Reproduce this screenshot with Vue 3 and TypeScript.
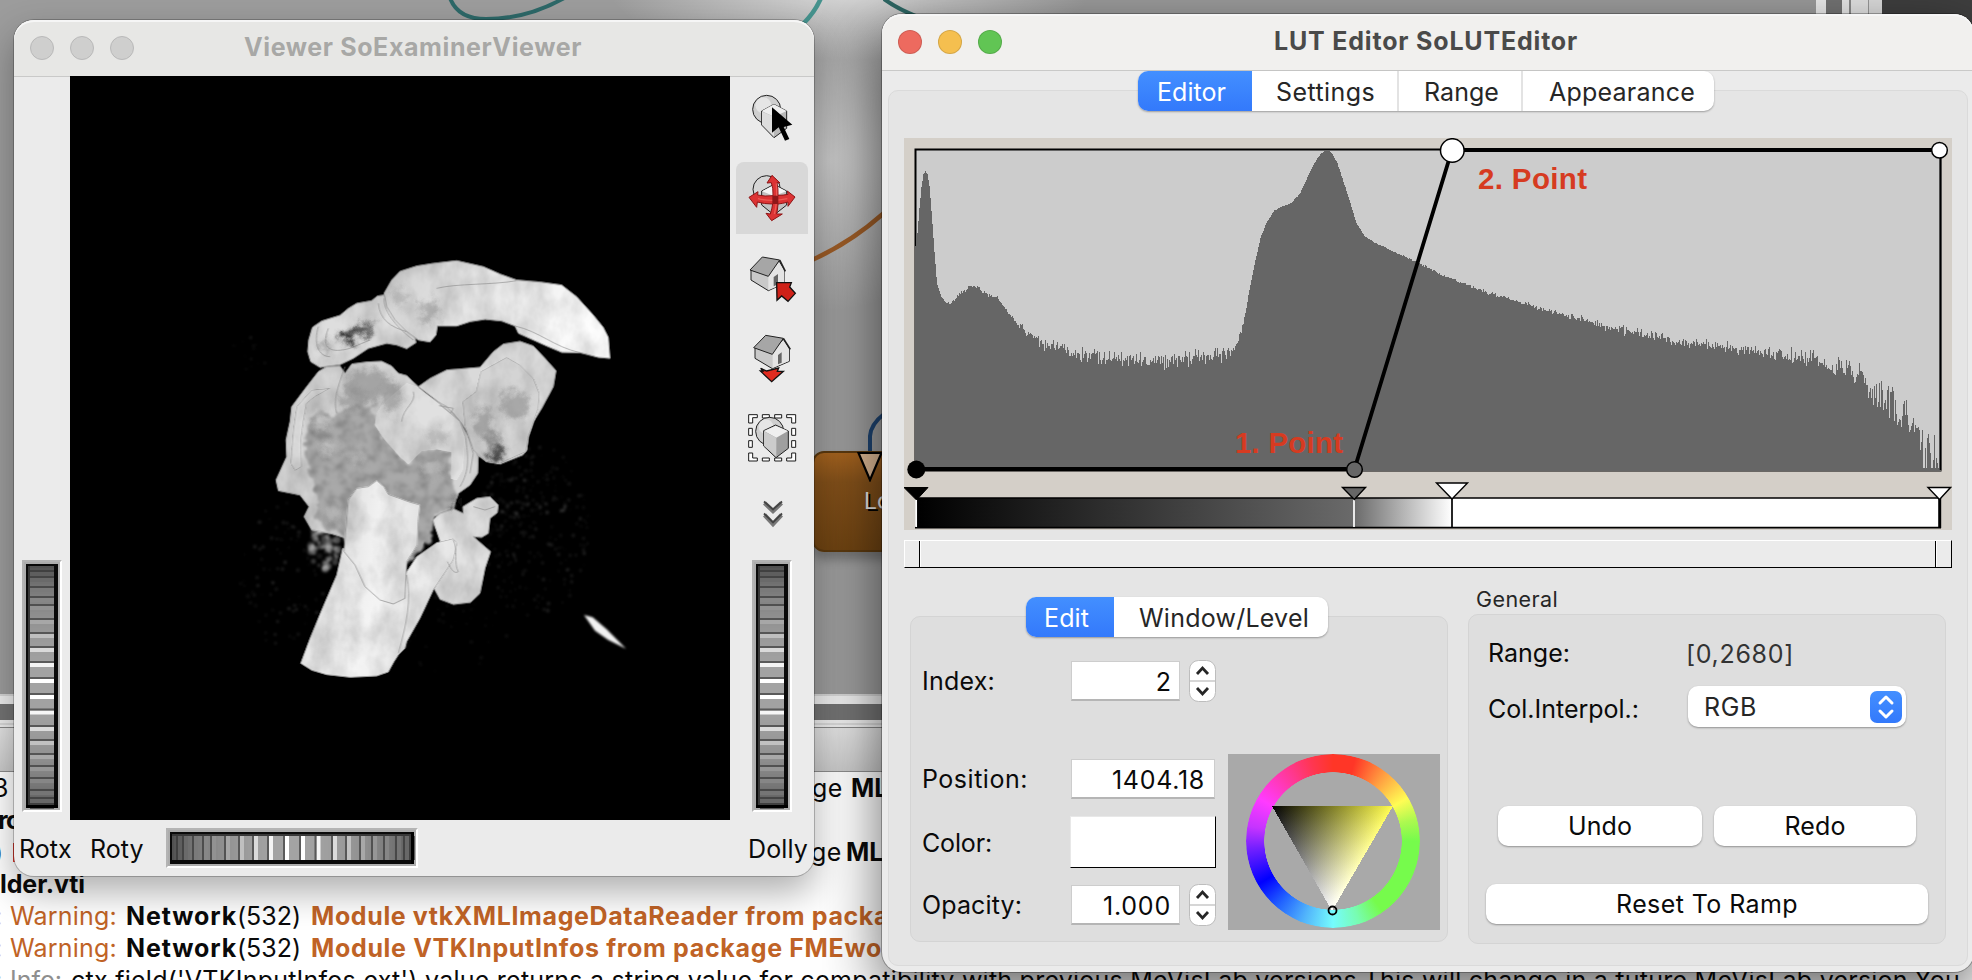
<script setup lang="ts">
import type { Directive } from 'vue'

/* Tracks a text so that it fills the given width in pixels. */
const vFit: Directive<HTMLElement, number> = {
  mounted(el, binding) {
    el.style.letterSpacing = '0px'
    const natural = el.getBoundingClientRect().width
    const count = Math.max(1, (el.textContent ?? '').length)
    el.style.letterSpacing = `${(binding.value - natural) / count}px`
  },
}

function createRandom(seed: number): () => number {
  let state = seed
  return () => {
    state = (state * 1664525 + 1013904223) % 4294967296
    return state / 4294967296
  }
}

type Point = [number, number]

/* ---------- histogram ---------- */
const profile: Point[] = [
  [915, 246], [917, 233], [919, 208], [921, 187], [923, 174], [925, 171], [927, 174], [929, 186], [931.5, 217], [934, 252], [936.5, 283],
  [941, 297], [946, 303], [953, 302], [960, 293], [973, 285], [984, 293], [997, 298], [1008, 313], [1018, 325],
  [1039, 342], [1064, 349], [1081, 355], [1123, 360], [1165, 360], [1207, 356], [1224, 353], [1236, 345], [1241, 332],
  [1245, 313], [1249, 290], [1253.5, 267], [1260, 238], [1266, 223], [1274, 210], [1283, 206], [1291, 203], [1300, 193],
  [1308, 175], [1314, 163], [1320, 154], [1324, 151], [1329, 151], [1332, 154], [1337, 163], [1343.5, 183], [1350, 203],
  [1356, 223], [1364, 236], [1373, 242], [1396, 253], [1417, 262], [1442, 275], [1480, 290], [1522, 303],
  [1564, 315], [1606, 326], [1648, 335], [1691, 343], [1733, 348], [1775, 354], [1808, 358], [1838, 367],
  [1855, 372], [1872, 387], [1888, 401], [1901, 414], [1914, 432], [1922, 444], [1931, 452], [1941, 456],
]
const noise: Point[] = [
  [915, 0], [945, 0], [950, 2.5], [1015, 3], [1030, 7], [1060, 9], [1110, 10], [1225, 10], [1240, 4], [1255, 0.5], [1370, 0.5],
  [1440, 1.5], [1560, 3.5], [1600, 6], [1700, 6], [1780, 8], [1840, 14], [1880, 20], [1920, 26], [1941, 28],
]
function sample(points: Point[], x: number): number {
  for (let i = 1; i < points.length; i++) {
    const [x0, y0] = points[i - 1]
    const [x1, y1] = points[i]
    if (x <= x1) return y0 + ((y1 - y0) * (x - x0)) / (x1 - x0)
  }
  return points[points.length - 1][1]
}
const rnd = createRandom(41)
let histogram = 'M915 471'
for (let x = 915; x < 1941; x++) {
  const r = (rnd() + rnd()) / 2 - 0.5
  let y = Math.round(sample(profile, x) + r * 2 * sample(noise, x))
  if (x > 1921 && rnd() < 0.5) y = 468
  histogram += `V${Math.min(469, y)}H${x + 1}`
}
histogram += 'V471Z'

/* ---------- thumb wheels ---------- */
interface Bar { y: number; h: number; fill: string }
const wheelBars: Bar[] = []
const grey = (v: number) => `rgb(${Math.round(v)},${Math.round(v)},${Math.round(v)})`
const light = (y: number) => Math.sqrt(Math.max(0, 1 - ((y - 126) / 126) ** 2))
for (let y = 6; y < 246; y += 2) wheelBars.push({ y, h: 2, fill: grey(45 + 118 * light(y)) })
for (const y of [10, 16, 26, 36, 44, 58, 72, 86, 101, 117, 133, 148.5, 165, 179, 193, 205, 217, 229, 237, 243]) {
  const l = light(y)
  wheelBars.push({ y: y + 2, h: 4, fill: grey(Math.min(255, 45 + 125 * l + 92 * l ** 10)) })
  wheelBars.push({ y, h: 2, fill: grey(48 + 42 * l) })
}

/* ---------- loose voxels around the bones ---------- */
interface Speck { x: number; y: number; r: number; o: number }
const specks: Speck[] = []
const srnd = createRandom(9)
function scatter(n: number, cx: number, cy: number, rx: number, ry: number, r: number, o: number) {
  for (let i = 0; i < n; i++) {
    const a = srnd() * Math.PI * 2
    const d = Math.sqrt(srnd())
    specks.push({ x: cx + Math.cos(a) * d * rx, y: cy + Math.sin(a) * d * ry, r: r * (0.5 + srnd()), o: o * (0.3 + srnd()) })
  }
}
scatter(230, 880, 870, 170, 260, 4, 0.1)
scatter(70, 850, 780, 130, 100, 4, 0.15)
scatter(90, 130, 1000, 130, 220, 4, 0.12)
scatter(70, 252, 925, 42, 70, 8, 0.32)
scatter(14, 30, 340, 60, 50, 3, 0.1)
scatter(50, 600, 1180, 200, 120, 4, 0.07)

/* ---------- log ---------- */
interface Seg { t: string; c?: string; w: number }
const warnings: Seg[][] = [
  [
    { t: 'Warning:', c: 'warn', w: 107 }, { t: 'Network', c: 'b', w: 111 }, { t: '(532)', w: 64 },
    { t: 'Module vtkXMLImageDataReader from package', c: 'b warn', w: 610 },
  ],
  [
    { t: 'Warning:', c: 'warn', w: 107 }, { t: 'Network', c: 'b', w: 111 }, { t: '(532)', w: 64 },
    { t: 'Module VTKInputInfos from package FMEwo', c: 'b warn', w: 571 },
  ],
]
const notice = "ctx.field('VTKInputInfos.ext').value returns a string value for compatibility with previous MeVisLab versions.This will change in a future MeVisLab version.You"
</script>

<template>
  <div class="screen">
    <!-- network canvas and log window behind the dialogs -->
    <div class="desk">
      <div class="network">
        <svg class="wires" width="1972" height="694" viewBox="0 0 1972 694" fill="none">
          <path d="M450 -2C456 14 470 19 486 19C512 19 540 12 566 -3" stroke="#2d6868" stroke-width="4" />
          <path d="M821 -2Q815 12 803 24" stroke="#45928d" stroke-width="4.5" />
          <path d="M884 -1Q898 9 916 16" stroke="#2d6663" stroke-width="4" />
          <path d="M812 260Q850 243 884 213" stroke="#9b5b26" stroke-width="4.5" />
          <path d="M870 454V436Q871 424 884 414" stroke="#1e4471" stroke-width="4" />
        </svg>
        <div class="edge"><i class="e1" /><i class="e2" /><i class="e3" /><i class="e4" /></div>
        <div class="node">
          <svg width="26" height="30" viewBox="0 0 26 30"><path d="M1.500 1H24.500L13 28Z" fill="#dcb894" stroke="#000" stroke-width="2.200" /></svg>
          <span>Lo</span>
        </div>
      </div>
      <div class="split" />
      <div class="loghead" />
      <div class="log">
        <div class="line"><span class="lead">3</span><span v-fit="31" class="after">ge</span><b class="ml">MLB</b></div>
        <div class="line"><b class="lead rc">rc</b></div>
        <div class="line"><span class="lead paren">)</span><i class="mark" /><span v-fit="31" class="after two">ge</span><b class="ml two">MLB</b></div>
        <div class="line"><b v-fit="85" class="der">lder.vti</b></div>
        <div v-for="(row, i) in warnings" :key="i" class="line">
          <span class="colon warn">:</span>
          <span v-for="(s, j) in row" :key="j" v-fit="s.w" :class="[s.c, 'seg' + j]">{{ s.t }}</span>
        </div>
        <div class="line">
          <span class="colon info">:</span>
          <span v-fit="52" class="seg0 info">Info:</span>
          <span v-fit="1889" class="notice">{{ notice }}</span>
        </div>
      </div>
    </div>

    <!-- viewer -->
    <section class="window viewer">
      <header class="titlebar">
        <div class="lights off"><i /><i /><i /></div>
        <h1 v-fit="338">Viewer SoExaminerViewer</h1>
      </header>
      <div class="viewbody">
        <div class="side">
          <svg class="wheel" width="40" height="252" viewBox="0 0 40 252">
            <rect width="40" height="252" fill="#fff" /><path d="M0 0H40L37 3V249H3L0 252Z" fill="#b4b4b4" />
            <rect x="2" y="2" width="36" height="248" fill="#adadad" /><rect x="4" y="4" width="32" height="244" fill="#0a0a0a" />
            <rect x="6" y="6" width="2" height="240" fill="#383838" />
            <rect v-for="(b, i) in wheelBars" :key="i" x="8" :y="b.y" width="24" :height="b.h" :fill="b.fill" />
            <rect x="4" y="245" width="32" height="3" fill="#000" />
          </svg>
        </div>

        <svg class="volume" width="660" height="744" viewBox="-510 -492 1980 2232">
          <defs>
            <filter id="bone" x="-5%" y="-5%" width="110%" height="110%">
              <feTurbulence type="fractalNoise" baseFrequency="0.014 0.009" numOctaves="4" seed="8" result="n" />
              <feColorMatrix in="n" values="0.6 0 0 0 0.59  0.6 0 0 0 0.59  0.6 0 0 0 0.59  0 0 0 0 1" result="g" />
              <feBlend in="SourceGraphic" in2="g" mode="multiply" result="m" />
              <feComposite in="m" in2="SourceGraphic" operator="in" result="c" />
              <feGaussianBlur in="c" stdDeviation="1.400" />
            </filter>
            <filter id="spongy" x="-5%" y="-5%" width="110%" height="110%">
              <feTurbulence type="fractalNoise" baseFrequency="0.030" numOctaves="4" seed="3" result="n" />
              <feDisplacementMap in="SourceGraphic" in2="n" scale="36" xChannelSelector="R" yChannelSelector="B" result="d" />
              <feColorMatrix in="n" values="0 0.900 0 0 0.440  0 0.900 0 0 0.440  0 0.900 0 0 0.440  0 0 0 0 1" result="g" />
              <feBlend in="d" in2="g" mode="multiply" result="m" />
              <feComposite in="m" in2="d" operator="in" result="c" />
              <feGaussianBlur in="c" stdDeviation="2.500" />
            </filter>
            <filter id="b3"><feGaussianBlur stdDeviation="3" /></filter>
            <filter id="b12" x="-50%" y="-50%" width="200%" height="200%">
              <feGaussianBlur stdDeviation="9" result="s" />
              <feTurbulence type="fractalNoise" baseFrequency="0.030" numOctaves="3" seed="5" result="n" />
              <feDisplacementMap in="s" in2="n" scale="50" xChannelSelector="R" yChannelSelector="G" />
            </filter>
            <linearGradient id="shaft" x1="0" y1="0" x2="1" y2="0.250">
              <stop offset="0" stop-color="#dedede" /><stop offset="0.550" stop-color="#f4f4f4" /><stop offset="1" stop-color="#e4e4e4" />
            </linearGradient>
            <linearGradient id="clav" x1="0" y1="0" x2="1" y2="0.200">
              <stop offset="0" stop-color="#cfcfcf" /><stop offset="0.450" stop-color="#e6e6e6" /><stop offset="1" stop-color="#fdfdfd" />
            </linearGradient>
          </defs>
          <rect x="-510" y="-492" width="1980" height="2232" fill="#000" />
          <g filter="url(#b3)">
            <circle v-for="(s, i) in specks" :key="i" :cx="s.x" :cy="s.y" :r="s.r" fill="#ddd" :opacity="s.o" />
          </g>
          <g filter="url(#bone)" stroke="#a5a5a5" stroke-width="3" stroke-linejoin="round">
            <path fill="#dedede" d="M432 165L412 168L395 182L350 190L325 205L300 226L245 243L217 262L206 300L203 335L212 365L240 382L300 374L340 355L385 325L440 310L470 315L500 326L528 308L524 290L470 240Z" />
            <path fill="url(#clav)" d="M432 160L455 120L480 94L530 78L580 70L650 62L730 80L780 102L830 120L900 126L965 135L1010 170L1060 225L1090 262L1105 292L1110 355L1075 352L1020 338L965 337L920 318L880 300L835 280L825 258L785 243L735 238L690 245L650 258L592 258L588 285L570 306L535 300L500 275L465 240L440 200Z" />
            <path fill="#dadada" d="M535 440L570 415L620 390L720 382L760 335L790 312L840 304L880 318L915 355L948 392L940 440L905 505L880 545L865 590L860 630L848 645L780 672L740 665L712 645L680 570L640 520Z" />
            <path fill="#d4d4d4" d="M260 380L300 378L315 400L335 372L380 366L425 364L455 378L475 400L500 407L535 440L555 465L620 500L660 545L685 590L715 650L713 700L690 735L655 760L640 805L580 830L540 930L310 892L270 880L215 870L192 830L207 800L180 765L115 752L108 720L140 650L138 600L150 545L155 500L200 440L235 395Z" />
            <path fill="#e2e2e2" d="M578 840L600 820L640 806L670 820L668 800L710 775L750 770L775 795L772 818L750 835L745 880L725 892L700 890L752 935L735 985L720 1060L692 1087L640 1093L600 1078L582 1045L620 960Z" />
          </g>
          <path filter="url(#spongy)" fill="#a9a9a9" d="M300 515L345 495L400 490L410 560L450 615L505 672L545 630L632 628L628 690L640 725L655 760L635 805L582 830L575 900L500 975L320 900L290 875L245 868L222 830L234 775L208 710L195 620L208 540L230 510L270 525Z" />
          <g filter="url(#b12)">
            <ellipse cx="265" cy="620" rx="22" ry="14" fill="#d0d0d0" opacity="0.600" /><ellipse cx="245" cy="545" rx="30" ry="20" fill="#d6d6d6" opacity="0.600" /><ellipse cx="350" cy="650" rx="24" ry="12" fill="#c8c8c8" opacity="0.500" />
            <ellipse cx="575" cy="685" rx="26" ry="16" fill="#c8c8c8" opacity="0.500" /><ellipse cx="280" cy="830" rx="20" ry="22" fill="#c4c4c4" opacity="0.500" /><ellipse cx="390" cy="435" rx="75" ry="45" fill="#858585" opacity="0.550" /><ellipse cx="345" cy="480" rx="45" ry="30" fill="#858585" opacity="0.500" />
          </g>
          <g filter="url(#bone)" stroke="#9c9c9c" stroke-width="2.500" stroke-linejoin="round">
            <path fill="#e0e0e0" d="M405 555L410 520L430 490L500 430L535 442L600 492L660 545L676 590L668 690L650 720L633 716L635 636L590 628L545 632L505 672L480 650L435 600Z" stroke="none" />
            <path fill="#d4d4d4" d="M668 485L708 455L722 395L800 352L840 375L880 415L898 460L895 505L865 590L858 635L780 670L738 664L700 630L675 560Z" />
            <path fill="#dedede" d="M270 445L225 470L200 490L190 545L183 600L185 680L165 692L152 670L160 570L170 500L215 450Z" />
            <path fill="url(#shaft)" d="M308 925L290 1005L245 1110L210 1195L182 1270L215 1291L260 1304L330 1312L410 1308L445 1296L462 1265L475 1245L495 1225L500 1205L540 1135L580 1050L640 960L652 908L640 896L590 908L530 950L497 1000L480 960Z" />
            <path fill="url(#shaft)" d="M325 780L350 745L385 740L410 722L432 740L445 763L505 785L540 795L534 845L532 915L500 965L495 1075L460 1092L420 1080L375 1040L345 975L312 935Z" />
          </g>
          <g fill="none" stroke="#878787" stroke-width="2.500" opacity="0.700">
            <path d="M432 175C430 220 480 270 520 300M415 190C420 240 450 260 500 275M235 260C220 310 235 350 270 350M265 265C240 330 275 340 330 325L390 300M590 145C650 130 760 135 830 122M825 258C900 275 940 320 1020 338" />
            <path d="M535 442L600 492L660 545L676 590M520 455C530 490 490 500 485 545M597 497L640 505L632 520L600 495M676 590C685 650 690 690 660 740M500 1005C515 1080 500 1150 475 1240M640 900C655 930 640 970 655 995C640 1005 630 980 622 965M700 800L735 810L765 800" />
            <path d="M315 380C290 450 280 480 290 520M685 590L700 640L690 700" />
          </g>
          <g filter="url(#b12)">
            <ellipse cx="362" cy="272" rx="38" ry="18" transform="rotate(-20 362 272)" fill="#555" />
            <ellipse cx="325" cy="292" rx="20" ry="13" fill="#111" /><ellipse cx="770" cy="645" rx="20" ry="24" fill="#333" opacity="0.900" /><ellipse cx="755" cy="600" rx="24" ry="20" fill="#666" opacity="0.600" />
            <ellipse cx="730" cy="545" rx="30" ry="45" fill="#888" opacity="0.600" /><ellipse cx="825" cy="495" rx="44" ry="40" fill="#8a8a8a" opacity="0.600" />
            <ellipse cx="455" cy="475" rx="26" ry="45" fill="#8d8d8d" opacity="0.600" />
            <ellipse cx="565" cy="215" rx="30" ry="35" fill="#8a8a8a" opacity="0.550" /><ellipse cx="480" cy="170" rx="22" ry="28" fill="#8a8a8a" opacity="0.350" /><ellipse cx="255" cy="320" rx="10" ry="22" fill="#666" opacity="0.500" />
            <ellipse cx="650" cy="790" rx="12" ry="16" fill="#111" /><ellipse cx="590" cy="590" rx="26" ry="22" fill="#999" opacity="0.400" />
          </g>
          <path filter="url(#b3)" fill="#f2f2f2" d="M1032 1125L1058 1132L1100 1168L1158 1226L1105 1200L1065 1172Z" />
        </svg>

        <div class="side tools">
          <svg class="tool" viewBox="18 6 216 216">
            <circle cx="110" cy="88" r="42" fill="#cfcfcf" stroke="#222" stroke-width="3" /><circle cx="100" cy="76" r="24" fill="#eee" opacity="0.700" />
            <path d="M95 93L132 73L170 93V145L132 173L95 135Z" fill="#b9b9b9" stroke="#222" stroke-width="3" /><path d="M95 93L132 73L170 93L132 110Z" fill="#eee" /><path d="M96 95L132 110V170L96 134Z" fill="#ddd" />
            <path d="M126 82V158L146 142L165 182L178 177L161 141L187 134Z" />
          </svg>
          <svg class="tool on" viewBox="18 246 216 216">
            <circle cx="110" cy="328" r="41" fill="#d6d6d6" stroke="#222" stroke-width="3" />
            <path d="M95 333L132 313L170 333V375L132 405L95 375Z" fill="#c2c2c2" stroke="#222" stroke-width="3" /><path d="M96 334L132 315L169 334L132 348Z" fill="#f5f5f5" />
            <path d="M126 286L150 309L141 308Q145 327 144 346Q160 346 174 343L172 333L195 351L174 379L174 366Q157 371 144 372Q143 387 140 402L157 402L125 422L108 400L121 402Q126 386 128 372Q102 372 82 366L80 382L57 352L84 335L83 345Q105 350 129 347Q130 325 124 308L111 309Z" fill="#dc3334" stroke="#8d1516" stroke-width="3" />
            <path d="M139 310Q143 365 133 402M84 356Q125 366 172 356" fill="none" stroke="#f36a63" stroke-width="4" opacity="0.700" /><rect x="127" y="347" width="18" height="25" fill="#8e1719" />
          </svg>
          <svg class="tool" viewBox="18 486 216 216">
            <path d="M63 570L112 583L147 543L163 570V610L115 632L63 600Z" fill="#c9c9c9" stroke="#222" stroke-width="3" /><path d="M115 584L147 546L163 572V610L115 631Z" fill="#e4e4e4" />
            <path d="M97 531L149 540L115 589L60 570Z" fill="#a6a6a6" stroke="#222" stroke-width="3" /><path d="M149 540L166 574" stroke="#222" stroke-width="5" /><path d="M131 591L144 582V613L131 619Z" fill="#666" />
            <path d="M140 608H184L179 621L196 640L174 664L155 648L141 661Z" fill="#cf2118" stroke="#111" stroke-width="4" />
          </svg>
          <svg class="tool" viewBox="18 726 216 216">
            <path d="M92 865L110 873L146 864L142 874H160L125 905L91 873H99Z" fill="#e02b1f" stroke="#111" stroke-width="4" />
            <path d="M75 803L126 816L160 778L178 806V844L127 866L75 835Z" fill="#c9c9c9" stroke="#222" stroke-width="3" /><path d="M128 818L160 780L177 807V843L128 864Z" fill="#e4e4e4" />
            <path d="M107 766L160 775L127 823L71 803Z" fill="#a6a6a6" stroke="#222" stroke-width="3" /><path d="M160 775L181 808" stroke="#222" stroke-width="5" /><path d="M144 825L155 817V848L144 853Z" fill="#666" />
          </svg>
          <svg class="tool" viewBox="18 966 216 216">
            <g fill="#fff" stroke="#1b1b1b" stroke-width="3">
              <path d="M56 1004H82V1013H68V1029H56ZM197 1004H170V1013H185V1029H197ZM56 1143H82V1134H68V1119H56ZM197 1143H170V1134H185V1119H197Z" />
              <path d="M97 1004H118V1014H97ZM134 1004H155V1014H134ZM97 1134H118V1143H97ZM134 1134H155V1143H134ZM56 1045H67V1066H56ZM56 1082H67V1102H56ZM185 1045H197V1066H185ZM185 1082H197V1102H185Z" />
            </g>
            <circle cx="119" cy="1054" r="42" fill="#cfcfcf" stroke="#222" stroke-width="3" /><circle cx="108" cy="1040" r="22" fill="#eee" opacity="0.700" />
            <path d="M101 1052L137 1035L175 1053V1105L138 1133L101 1098Z" fill="#9f9f9f" stroke="#222" stroke-width="3" /><path d="M102 1053L137 1037L174 1053L139 1073Z" fill="#efefef" /><path d="M102 1054L139 1073V1131L102 1097Z" fill="#ccc" />
          </svg>
          <svg class="chev" width="20" height="28" viewBox="0 0 20 28" fill="none" stroke="#777" stroke-width="4.400">
            <path d="M1.500 3L10 11L18.500 3" /><path d="M1.500 15L10 24L18.500 15" />
            <path d="M1 1.500L10 9.500L19 1.500M1 13.500L10 22.500L19 13.500" stroke="#444" stroke-width="1.800" />
          </svg>
          <svg class="wheel" width="40" height="252" viewBox="0 0 40 252">
            <rect width="40" height="252" fill="#fff" /><path d="M0 0H40L37 3V249H3L0 252Z" fill="#b4b4b4" />
            <rect x="2" y="2" width="36" height="248" fill="#adadad" /><rect x="4" y="4" width="32" height="244" fill="#0a0a0a" />
            <rect x="6" y="6" width="2" height="240" fill="#383838" />
            <rect v-for="(b, i) in wheelBars" :key="i" x="8" :y="b.y" width="24" :height="b.h" :fill="b.fill" />
            <rect x="4" y="245" width="32" height="3" fill="#000" />
          </svg>
        </div>
      </div>
      <footer class="viewfoot">
        <span v-fit="52" class="rotx">Rotx</span><span v-fit="53" class="roty">Roty</span>
        <svg class="hwheel" width="252" height="40" viewBox="0 0 252 40">
          <g transform="matrix(0 1 1 0 0 0)">
            <rect width="40" height="252" fill="#fff" /><path d="M0 0H40L37 3V249H3L0 252Z" fill="#b4b4b4" />
            <rect x="2" y="2" width="36" height="248" fill="#adadad" /><rect x="4" y="4" width="32" height="244" fill="#0a0a0a" />
            <rect x="6" y="6" width="2" height="240" fill="#383838" />
            <rect v-for="(b, i) in wheelBars" :key="i" x="8" :y="b.y" width="24" :height="b.h" :fill="b.fill" />
            <rect x="4" y="245" width="32" height="3" fill="#000" />
          </g>
        </svg>
        <span v-fit="60" class="dolly">Dolly</span>
      </footer>
    </section>

    <!-- LUT editor -->
    <section class="window lut">
      <header class="titlebar">
        <div class="lights"><i class="r" /><i class="y" /><i class="g" /></div>
        <h1 v-fit="304">LUT Editor SoLUTEditor</h1>
      </header>
      <div class="lutbody">
        <nav class="tabs main">
          <span class="on t1"><em v-fit="69">Editor</em></span><span class="t2"><em v-fit="99">Settings</em></span><span class="t3"><em v-fit="75">Range</em></span><span class="t4"><em v-fit="146">Appearance</em></span>
        </nav>
        <div class="pane">
          <svg class="plot" width="1048" height="392" viewBox="904 138 1048 392">
            <defs>
              <linearGradient id="ramp1" x1="0" x2="1"><stop offset="0" stop-color="#000" /><stop offset="1" stop-color="#6a6a6a" /></linearGradient>
              <linearGradient id="ramp2" x1="0" x2="1"><stop offset="0" stop-color="#6a6a6a" /><stop offset="1" stop-color="#fff" /></linearGradient>
            </defs>
            <rect x="904" y="138" width="1048" height="392" fill="#d4cfc8" />
            <rect x="915.500" y="149.500" width="1025" height="321" fill="#ccc" stroke="#000" stroke-width="2" />
            <path :d="histogram" fill="#666" shape-rendering="crispEdges" />
            <path d="M1940.500 150V470" stroke="#000" stroke-width="1.500" />
            <text x="1235" y="453" textLength="108">1. Point</text>
            <text x="1478" y="189" textLength="109">2. Point</text>
            <path d="M916 469H1354.500L1452 150H1939" fill="none" stroke="#000" stroke-width="3.800" />
            <circle cx="916.300" cy="469.500" r="9" />
            <circle cx="1354.500" cy="469.500" r="7.800" fill="#666" stroke="#000" stroke-width="1.500" />
            <circle cx="1452.300" cy="150.500" r="11.800" fill="#fff" stroke="#000" stroke-width="1.500" />
            <circle cx="1939.500" cy="150.300" r="7.800" fill="#fff" stroke="#000" stroke-width="1.500" />
            <rect x="917" y="498" width="437" height="30" fill="url(#ramp1)" /><rect x="1354" y="498" width="98" height="30" fill="url(#ramp2)" /><rect x="1452" y="498" width="487" height="30" fill="#fff" />
            <path d="M915 498H1941M915 527.700H1941" stroke="#000" stroke-width="1.700" />
            <path d="M916.200 499V527M1354 499V527" stroke="#fff" stroke-width="1.700" /><path d="M1452 498V528" stroke="#000" stroke-width="1.700" /><path d="M1939.700 498V528" stroke="#000" stroke-width="3" />
            <path d="M904 487.500H928L916.500 500Z" stroke="#000" /><path d="M1342.500 487.500H1365.500L1354.300 499.500Z" fill="#666" stroke="#000" stroke-width="1.400" />
            <path d="M1436.500 483H1467.500L1452 499Z" fill="#fff" stroke="#000" stroke-width="1.400" /><path d="M1928 487.500H1950.500L1939.500 499.500Z" fill="#fff" stroke="#000" stroke-width="1.400" />
          </svg>
          <div class="range"><i class="h1" /><i class="h2" /></div>
          <div class="cols">
            <div class="left">
              <nav class="tabs sub"><span class="on t5"><em v-fit="45">Edit</em></span><span class="t6"><em v-fit="170">Window/Level</em></span></nav>
              <div class="group edit">
                <div class="row r1"><label v-fit="73">Index:</label><div class="field short"><em>2</em></div><svg class="stepper" viewBox="0 0 27 42"><rect x="0.500" y="0.500" width="26" height="41" rx="9" fill="#fff" stroke="#bdbdbd" /><path d="M1 21H26" stroke="#c9c9c9" stroke-width="1.500" /><path d="M8 14L13.500 8L19 14M8 28L13.500 34L19 28" fill="none" stroke="#262626" stroke-width="2.800" /></svg></div>
                <div class="mix">
                  <div class="stack">
                    <div class="row r2"><label v-fit="106">Position:</label><div class="field"><em v-fit="93">1404.18</em></div></div>
                    <div class="row r3"><label v-fit="70">Color:</label><div class="swatch" /></div>
                    <div class="row r4"><label v-fit="100">Opacity:</label><div class="field short"><em v-fit="68">1.000</em></div><svg class="stepper" viewBox="0 0 27 42"><rect x="0.500" y="0.500" width="26" height="41" rx="9" fill="#fff" stroke="#bdbdbd" /><path d="M1 21H26" stroke="#c9c9c9" stroke-width="1.500" /><path d="M8 14L13.500 8L19 14M8 28L13.500 34L19 28" fill="none" stroke="#262626" stroke-width="2.800" /></svg></div>
                  </div>
                  <div class="picker">
                    <div class="hue" />
                    <svg class="tri" width="212" height="176" viewBox="1228 754 212 176">
                      <defs>
                        <linearGradient id="sat" gradientUnits="userSpaceOnUse" x1="1301.500" y1="858" x2="1393.500" y2="806"><stop offset="0" stop-color="#000" /><stop offset="1" stop-color="#fffc4c" /></linearGradient>
                        <linearGradient id="val" gradientUnits="userSpaceOnUse" x1="1332" y1="806" x2="1332" y2="910"><stop offset="0" stop-color="#000" /><stop offset="1" stop-color="#fff" /></linearGradient>
                      </defs>
                      <g class="iso" shape-rendering="crispEdges"><path d="M1272 806H1393L1332 911Z" fill="url(#sat)" /><path class="add" d="M1272 806H1393L1332 911Z" fill="url(#val)" /></g>
                      <circle cx="1332.500" cy="910.500" r="4" fill="none" stroke="#000" stroke-width="1.800" />
                    </svg>
                  </div>
                </div>
              </div>
            </div>
            <div class="right">
              <h2 v-fit="82">General</h2>
              <div class="group general">
                <div class="grow g1"><label v-fit="82">Range:</label><em v-fit="108">[0,2680]</em></div>
                <div class="grow g2"><label v-fit="151">Col.Interpol.:</label>
                  <div class="select"><em v-fit="53">RGB</em><span class="updown"><svg width="32" height="32" viewBox="0 0 32 32" fill="none" stroke="#fff" stroke-width="3" stroke-linecap="round" stroke-linejoin="round"><path d="M10 12L16 6L22 12M10 20L16 26L22 20" /></svg></span></div>
                </div>
                <div class="buttons"><button class="undo"><em v-fit="64">Undo</em></button><button class="redo"><em v-fit="61">Redo</em></button></div>
                <button class="reset"><em v-fit="182">Reset To Ramp</em></button>
              </div>
            </div>
          </div>
        </div>
      </div>
    </section>
  </div>
</template>

<style>
html, body { margin: 0; overflow: hidden; }
</style>

<style scoped>
* { box-sizing: border-box; }
.screen { position: relative; width: 1972px; height: 980px; overflow: hidden; font: 25px/32px Inter, "Liberation Sans", sans-serif; color: #0a0a0a; background: #fff; }
em, h1, h2, label, span, b { font-style: normal; white-space: pre; }
em, label { display: inline-block; flex: none; }
h1, h2 { margin: 0; }

/* background */
.desk { display: flex; flex-direction: column; height: 100%; }
.network { position: relative; height: 694px; flex: none; background: radial-gradient(ellipse 150px 150px at 830px 160px, #c8c8c8, transparent), radial-gradient(ellipse 240px 70px at 850px -10px, #dadada, transparent), #9c9c9c; }
.wires { position: absolute; left: 0; top: 0; }
.edge { position: absolute; left: 1816px; top: 0; width: 156px; height: 30px; display: flex; background: #3f3f3f; }
.edge i { height: 100%; }
.e1 { width: 10px; background: #ececec; }
.e2 { width: 16px; background: #747474; }
.e3 { width: 9px; background: #e9e9e9; border-right: 2px solid #8b8b8b; }
.e4 { width: 31px; background: linear-gradient(90deg, #e4e4e4 17px, #999 17px, #999 18px, #ddd 18px); }
.node { position: absolute; left: 812px; top: 451px; width: 120px; height: 101px; border-radius: 12px; background: linear-gradient(#a5631f, #82501a 30%, #6e4312); border: 2px solid #5b390f; box-shadow: 0 8px 10px rgba(0,0,0,.25); }
.node svg { display: block; margin: -1px 0 0 43px; }
.node span { display: block; margin: 3px 0 0 50px; color: #e8e8e8; text-shadow: 2px 2px 0 #000; font-size: 23px; }
.split { height: 34px; flex: none; background: linear-gradient(#d4d4d4 2px, #ededed 2px 10px, #737373 10px 26px, #ededed 26px 29px, #d8d8d8 29px 31px, #ededed 31px 33px, #888 33px); }
.loghead { height: 47px; flex: none; background: linear-gradient(#e3e3e3, #c9c9c9); border-bottom: 2px solid #8c8c8c; }
.log { flex: 1; margin-top: -4px; border-top: 1px solid #8c8c8c; background: #fff; }
.line { display: flex; height: 32px; }
.line span, .line b { flex: none; }
.lead { width: 12px; margin-left: -7px; }
.rc { margin-left: -2px; font-weight: 700; width: 18px; letter-spacing: -1.5px; }
.paren { margin-left: -6px; }
.mark { width: 3px; height: 19px; margin: 7px 0 0 7px; background: #e03b30; }
.after { margin-left: 807px; }
.after.two { margin-left: 795px; }
.ml { margin-left: 8px; }
.ml.two { margin-left: 4px; }
.warn { color: #c06326; }
.b { font-weight: 700; }
.info { color: #8f8f8f; }
.colon { width: 10px; margin-left: -5px; }
.seg0 { margin-left: 5px; }
.seg1 { margin-left: 9px; }
.seg2 { margin-left: 0; }
.seg3 { margin-left: 10px; }
.notice { margin-left: 9px; }

/* windows */
.window { position: absolute; background: #ebebeb; border-radius: 20px; }
.viewer { left: 14px; top: 20px; width: 800px; height: 856px; box-shadow: 0 0 0 1px rgba(0,0,0,.22), 0 16px 36px rgba(0,0,0,.32); }
.lut { left: 882px; top: 14px; width: 1092px; height: 958px; box-shadow: 0 0 0 1px rgba(0,0,0,.28), 0 22px 60px rgba(0,0,0,.6); }
.titlebar { height: 57px; display: flex; align-items: center; border-radius: 20px 20px 0 0; border-bottom: 1px solid #c9c9c8; background: #e7e7e5; box-shadow: inset 0 2px 0 #f6f6f6; }
.lut .titlebar { background: #f1f0ee; }
.lights { display: flex; gap: 16px; margin-left: 16px; }
.lights i { width: 24px; height: 24px; border-radius: 50%; border: 1px solid rgba(0,0,0,.13); }
.off i { background: #cfcfce; border-color: #b9b9b9; }
.r { background: #ed6a5f; } .y { background: #f5bf4f; } .g { background: #61c554; }
.titlebar h1 { font-size: 25px; line-height: 32px; font-weight: 700; }
.viewer h1 { margin-left: 110px; margin-top: -2px; color: #a8a8a6; }
.lut h1 { margin-left: 272px; margin-top: -2px; color: #4a4a49; }

.viewbody { display: flex; height: 744px; margin-top: -1px; }
.side { width: 56px; display: flex; flex-direction: column; justify-content: flex-end; padding: 0 0 8px 8px; }
.wheel, .volume, .hwheel { display: block; flex: none; }
.tools { width: 84px; padding: 6px 6px 8px; justify-content: flex-start; gap: 8px; }
.tool { width: 72px; height: 72px; flex: none; }
.tool.on { background: #d8d8d8; border-radius: 8px 8px 0 0; }
.chev { margin: 18px 0 0 27px; flex: none; }
.tools .wheel { margin: auto 0 0 16px; }
.viewfoot { display: flex; height: 56px; padding: 8px 0 0 5px; }
.viewfoot span { flex: none; margin-top: 5px; }
.rotx { width: 52px; }
.viewfoot .roty { width: 53px; margin-left: 19px; }
.hwheel { margin-left: 23px; }
.dolly { margin-left: 330px; }

/* LUT editor */
.lutbody { display: flex; flex-direction: column; padding: 0 6px 6px; }
.tabs { display: flex; height: 40px; border-radius: 10px; background: #fff; box-shadow: 0 1px 2px rgba(0,0,0,.32); position: relative; z-index: 1; color: #262626; overflow: hidden; }
.tabs span { display: flex; align-items: center; padding-top: 2px; }
.tabs .on { background: linear-gradient(#438fff, #3379fb); color: #fff; }
.main { width: 576px; margin-left: 250px; flex: none; }
.t1 { width: 114px; padding-left: 19px; } .t2 { width: 147px; padding-left: 24px; border-right: 2px solid #e3e3e3; }
.t3 { width: 124px; padding-left: 25px; border-right: 2px solid #e3e3e3; } .t4 { padding-left: 26px; }
.pane { margin-top: -21px; height: 876px; width: 1080px; flex: none; background: #e5e5e5; border: 1px solid #dadada; border-radius: 10px; padding: 47px 14px 0 15px; display: flex; flex-direction: column; }
.plot { flex: none; display: block; }
.plot text { font: 700 29.5px "Liberation Sans", Arial, sans-serif; fill: #d63b21; }
.range { flex: none; display: flex; justify-content: space-between; margin-top: 10px; width: 1048px; height: 28px; background: #ebebeb; border-top: 1px solid #fff; border-left: 1px solid #fff; border-bottom: 1.5px solid #000; border-right: 1px solid #000; }
.h1 { width: 15px; border-right: 1px solid #000; box-shadow: 1px 0 0 #fff; }
.h2 { width: 16px; border-left: 1px solid #000; box-shadow: inset 1px 0 0 #fff; }
.cols { display: flex; margin-top: 22px; }
.left { margin-left: 6px; width: 538px; }
.sub { width: 302px; margin: 7px 0 0 116px; }
.t5 { width: 88px; padding-left: 18px; } .t6 { padding-left: 25px; }
.group { background: #dedede; border: 1px solid #d4d4d4; border-radius: 10px; }
.edit { height: 326px; margin-top: -21px; padding: 43px 0 0 11px; }
.row { display: flex; align-items: center; height: 42px; width: 294px; }
.row label { margin-right: auto; }
.field { width: 144px; height: 40px; background: #fff; border: 1px solid #cdcdcd; border-bottom: 2px solid #b5b5b5; display: flex; align-items: center; justify-content: flex-end; padding: 3px 9px 0 0; flex: none; margin-right: 1px; }
.field.short { width: 109px; margin-right: 0; padding-right: 8px; }
.stepper { width: 27px; height: 42px; margin-left: 9px; flex: none; }
.mix { display: flex; margin-top: 52px; }
.r2 { margin-top: 4px; }
.r3 { height: 52px; margin-top: 16px; }
.r3 label { padding-top: 2px; }
.r4 { margin-top: 16px; }
.swatch { width: 146px; height: 52px; background: #fff; border: 1px solid #e8e8e8; border-right: 1.5px solid #000; border-bottom: 1.5px solid #000; }
.picker { position: relative; width: 212px; height: 176px; margin-left: 12px; background: #a9a9a9; }
.hue { position: absolute; left: 18px; top: 0; width: 174px; height: 174px; border-radius: 50%; background: conic-gradient(#ff3627 0deg 15deg, #ffa041 38deg, #fffc54 60deg, #aef950 75deg, #76fb4c 90deg 145deg, #78fcb0 162deg, #75fbfd 180deg, #52b5fb 200deg, #2264ff 220deg, #0000ff 240deg, #7520ff 265deg, #c634ff 280deg, #ff3bff 300deg, #ff39b0 320deg, #ff3650 345deg, #ff3627); -webkit-mask: radial-gradient(circle, transparent 68.5px, #000 69px); mask: radial-gradient(circle, transparent 68.5px, #000 69px); }
.tri { position: absolute; left: 0; top: 0; }
.iso { isolation: isolate; }
.add { mix-blend-mode: plus-lighter; }
.right { margin-left: 20px; width: 478px; display: flex; flex-direction: column; align-items: flex-start; }
h2 { font-size: 21.5px; font-weight: 400; line-height: 24px; margin-left: 8px; margin-top: -3px; color: #262626; }
.general { width: 478px; height: 330px; margin-top: 3px; padding: 21px 0 0 19px; }
.grow { display: flex; align-items: center; height: 34px; }
.g1 em { margin-left: 116px; color: #333; padding-top: 1px; }
.g2 { margin-top: 16px; height: 41px; }
.g2 label { padding-top: 4px; }
.select { width: 218px; height: 41px; margin-left: 49px; border-radius: 10px; background: #fff; box-shadow: 0 1px 2px rgba(0,0,0,.35); display: flex; align-items: center; justify-content: space-between; padding: 0 4px 0 16px; color: #262626; }
.select em { padding-top: 1px; }
.updown { width: 32px; height: 32px; border-radius: 7px; background: linear-gradient(#438fff, #3379fb); display: block; }
.updown svg { display: block; }
.buttons { display: flex; gap: 12px; margin: 79px 0 0 10px; }
button { font: inherit; color: #0a0a0a; height: 40px; border: 0; border-radius: 10px; background: #fff; box-shadow: 0 1px 2px rgba(0,0,0,.35); padding: 0 0 1px; }
.undo { width: 204px; } .redo { width: 202px; }
.reset { width: 442px; margin: 38px 0 0 -2px; display: block; }
</style>
